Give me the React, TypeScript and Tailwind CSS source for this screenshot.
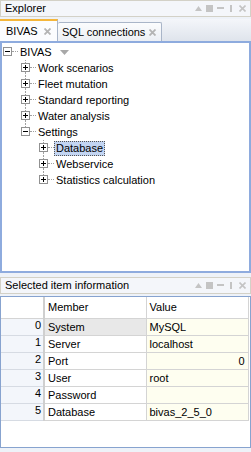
import React from "react";

const font = { fontFamily: '"Liberation Sans", Arial, sans-serif' };

const PaneButtons = () => (
  <div className="ml-auto flex items-center gap-[4px] pr-[4px]">
    <svg width="7" height="5" viewBox="0 0 7 5"><path d="M0 5 L3.5 0 L7 5 Z" fill="#c4c4c4" /></svg>
    <svg width="7" height="7" viewBox="0 0 7 7"><rect width="7" height="7" fill="#c4c4c4" /></svg>
    <svg width="7" height="3" viewBox="0 0 7 3"><rect width="7" height="2" fill="#c4c4c4" /></svg>
    <svg width="7" height="7" viewBox="0 0 7 7"><rect x="2" width="2" height="7" fill="#c4c4c4" /></svg>
    <svg width="7" height="7" viewBox="0 0 7 7"><path d="M0.5 0.5 L6.5 6.5 M6.5 0.5 L0.5 6.5" stroke="#c4c4c4" strokeWidth="1.6" /></svg>
  </div>
);

const PaneTitle = ({ title }: { title: string }) => (
  <div className="flex h-[17px] items-center border border-[#d3d1c7] bg-[#f4f6fa] pl-[4px] text-[11px] text-black">
    <span>{title}</span>
    <PaneButtons />
  </div>
);

const CloseX = () => (
  <svg width="7" height="7" viewBox="0 0 7 7">
    <path d="M0.5 0.5 L6.5 6.5 M6.5 0.5 L0.5 6.5" stroke="#b4b4b4" strokeWidth="1.8" />
  </svg>
);

const Expander = ({ open }: { open: boolean }) => (
  <div className="ml-[1px] flex h-[9px] w-[9px] items-center justify-center border border-[#919191] bg-white">
    <svg width="5" height="5" viewBox="0 0 5 5">
      <rect x="0" y="2" width="5" height="1" fill="#000" />
      {!open && <rect x="2" y="0" width="1" height="5" fill="#000" />}
    </svg>
  </div>
);

type Row = {
  label: string;
  level: number;
  open: boolean;
  guides: boolean[];
  hasParent: boolean;
  hasNext: boolean;
  selected?: boolean;
  arrow?: boolean;
};

const rows: Row[] = [
  { label: "BIVAS", level: 0, open: true, guides: [], hasParent: false, hasNext: false, arrow: true },
  { label: "Work scenarios", level: 1, open: false, guides: [false], hasParent: true, hasNext: true },
  { label: "Fleet mutation", level: 1, open: false, guides: [false], hasParent: true, hasNext: true },
  { label: "Standard reporting", level: 1, open: false, guides: [false], hasParent: true, hasNext: true },
  { label: "Water analysis", level: 1, open: false, guides: [false], hasParent: true, hasNext: true },
  { label: "Settings", level: 1, open: true, guides: [false], hasParent: true, hasNext: false },
  { label: "Database", level: 2, open: false, guides: [false, false], hasParent: true, hasNext: true, selected: true },
  { label: "Webservice", level: 2, open: false, guides: [false, false], hasParent: true, hasNext: true },
  { label: "Statistics calculation", level: 2, open: false, guides: [false, false], hasParent: true, hasNext: false },
];

const TreeRow = ({ row }: { row: Row }) => (
  <div className="flex h-[16px] items-stretch">
    {row.guides.map((g, i) => (
      <div key={i} className="w-[18px] shrink-0">
        {g && <div className="ml-[5px] h-full border-l border-dotted border-[#a0a0a0]" />}
      </div>
    ))}
    <div className="flex w-[16px] shrink-0 flex-col">
      <div className="h-[3px]">
        {row.hasParent && <div className="ml-[5px] h-full border-l border-dotted border-[#a0a0a0]" />}
      </div>
      <div className="flex h-[9px] items-center">
        <Expander open={row.open} />
        <div className="w-[6px] border-t border-dotted border-[#a0a0a0]" />
      </div>
      <div className="flex-1">
        {row.hasNext && <div className="ml-[5px] h-full border-l border-dotted border-[#a0a0a0]" />}
      </div>
    </div>
    <div className="flex items-center">
      <span
        className={
          row.selected
            ? "border border-dotted border-[#555] bg-[#c3d5f2] px-[1px] leading-[13px]"
            : "border border-transparent px-[1px] leading-[13px]"
        }
      >
        {row.label}
      </span>
      {row.arrow && (
        <svg className="ml-[6px]" width="9" height="5" viewBox="0 0 9 5">
          <path d="M0 0 L9 0 L4.5 5 Z" fill="#a8a8a8" />
        </svg>
      )}
    </div>
  </div>
);

const gridRows = [
  { member: "System", value: "MySQL" },
  { member: "Server", value: "localhost" },
  { member: "Port", value: "0", right: true },
  { member: "User", value: "root" },
  { member: "Password", value: "" },
  { member: "Database", value: "bivas_2_5_0" },
];

export default function App() {
  return (
    <div className="flex h-[452px] w-[251px] flex-col bg-[#eef2f8] text-[11px] text-black" style={font}>
      <PaneTitle title="Explorer" />

      <div className="mt-[2px] flex h-[22px] items-end bg-gradient-to-b from-[#f4f6fa] to-[#dfe4ec]">
        <div className="flex h-[22px] w-[58px] items-center border-t-2 border-r border-t-[#f5b63a] border-r-[#a9b5c8] bg-[#fbfcfe] pl-[6px] pr-[6px]">
          <span>BIVAS</span>
          <span className="ml-auto"><CloseX /></span>
        </div>
        <div className="flex h-[19px] w-[104px] items-center rounded-t-[2px] border-t border-r border-[#a9b5c8] bg-gradient-to-b from-[#fbfcfd] to-[#eceff4] pl-[4px] pr-[5px]">
          <span>SQL connections</span>
          <span className="ml-auto"><CloseX /></span>
        </div>
      </div>

      <div className="h-[232px] border-2 border-[#8eabde] bg-white pt-[1px]">
        {rows.map((r) => (
          <TreeRow key={r.label + r.level} row={r} />
        ))}
      </div>

      <div className="mt-[4px]">
        <PaneTitle title="Selected item information" />
      </div>

      <div className="mt-[2px] h-[152px] border border-[#87a3cf] bg-white">
        <table className="w-[247px] table-fixed border-collapse">
          <colgroup>
            <col className="w-[43px]" />
            <col className="w-[102px]" />
            <col className="w-[102px]" />
          </colgroup>
          <thead>
            <tr className="h-[21px]">
              <th className="border-r-2 border-b border-r-[#cfcfcf] border-b-[#d4d4d4] bg-white" />
              <th className="border-r border-b border-[#d4d4d4] bg-white pl-[3px] text-left font-normal">Member</th>
              <th className="border-r border-b border-[#d4d4d4] bg-white pl-[3px] text-left font-normal">Value</th>
            </tr>
          </thead>
          <tbody>
            {gridRows.map((r, i) => (
              <tr key={r.member} className="h-[17px]">
                <td className="border-r-2 border-b border-r-[#cfcfcf] border-b-[#d6dbe3] bg-[#f3f6fb] pr-[2px] text-right align-top leading-[13px]">
                  {i}
                </td>
                <td
                  className={
                    i === 0
                      ? "border-r border-b border-[#d4d4d4] bg-[#e8e8e8] pl-[3px] leading-[14px]"
                      : "border-r border-b border-[#d4d4d4] bg-white pl-[3px] leading-[14px]"
                  }
                >
                  {r.member}
                </td>
                <td
                  className={
                    r.right
                      ? "border-r border-b border-[#d4d4d4] bg-[#fefef0] pr-[3px] text-right leading-[14px]"
                      : "border-r border-b border-[#d4d4d4] bg-[#fefef0] pl-[3px] leading-[14px]"
                  }
                >
                  {r.value}
                </td>
              </tr>
            ))}
          </tbody>
        </table>
      </div>
    </div>
  );
}
